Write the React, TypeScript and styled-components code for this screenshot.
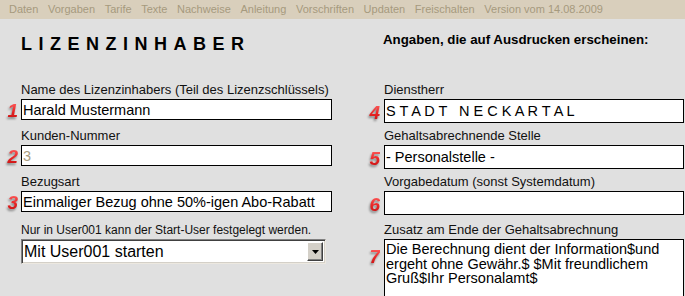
import React from "react";
import styled, { createGlobalStyle } from "styled-components";

const Global = createGlobalStyle`
  html, body { margin: 0; padding: 0; overflow: hidden; }
  body {
    background: #e0e0e0;
    font-family: "Liberation Sans", Arial, sans-serif;
    color: #000;
  }
`;

const Page = styled.div`
  width: 685px;
  height: 296px;
  overflow: hidden;
  background: #e0e0e0;
`;

const MenuBar = styled.nav`
  display: flex;
  gap: 9.6px;
  height: 19px;
  padding-left: 9px;
  background: #d9cfbc;
  font: 11px/19px "Liberation Sans", Arial, sans-serif;
  color: #a69a7e;
  white-space: nowrap;
`;

const MenuItem = styled.span`
  cursor: pointer;
`;

const Main = styled.div`
  display: grid;
  grid-template-columns: 332px 1fr;
  grid-template-rows: 63px auto;
  column-gap: 28px;
`;

const MainTitle = styled.h1`
  margin: 0;
  padding: 15px 0 0 21px;
  font: bold 18px/20px "Liberation Sans", Arial, sans-serif;
  letter-spacing: 6.5px;
`;

const SubTitle = styled.h2`
  margin: 0;
  padding: 13px 0 0 23px;
  font: bold 13.3px/16px "Liberation Sans", Arial, sans-serif;
`;

const Stack = styled.div`
  display: flex;
  flex-direction: column;
`;

const Field = styled.div<{ $gap: number; $top?: number }>`
  display: flex;
  flex-direction: column;
  margin-bottom: ${(p) => p.$gap}px;
  margin-top: ${(p) => p.$top ?? 0}px;
`;

const Label = styled.label<{ $indent: number; $size?: number }>`
  display: block;
  height: 16px;
  margin-bottom: 1px;
  padding-left: ${(p) => p.$indent}px;
  font: ${(p) => p.$size ?? 13}px/16px "Liberation Sans", Arial, sans-serif;
  color: #111;
  white-space: nowrap;
`;

const Row = styled.div`
  display: flex;
  align-items: center;
`;

const Gutter = styled.div<{ $w: number; $pad: number; $top?: boolean }>`
  flex: 0 0 ${(p) => p.$w}px;
  box-sizing: border-box;
  padding-right: ${(p) => p.$pad}px;
  display: flex;
  justify-content: flex-end;
  align-self: ${(p) => (p.$top ? "flex-start" : "center")};
  padding-top: ${(p) => (p.$top ? 9 : 3)}px;
`;

const Num = styled.span`
  font: italic bold 19px/18px "Liberation Sans", Arial, sans-serif;
  background: linear-gradient(180deg, #ff6060 0%, #ea2626 50%, #c41010 100%);
  -webkit-background-clip: text;
  background-clip: text;
  color: transparent;
  filter: drop-shadow(-1px 2px 1.2px rgba(0, 0, 0, 0.4));
`;

const TextInput = styled.input<{ $w: number; $h: number; $muted?: boolean }>`
  box-sizing: border-box;
  width: ${(p) => p.$w}px;
  height: ${(p) => p.$h}px;
  margin: 0;
  padding: 0 1px;
  border: 1px solid #000;
  background: #fff;
  font: 14.5px "Liberation Sans", Arial, sans-serif;
  color: ${(p) => (p.$muted ? "#a89c80" : "#000")};
  outline: none;
  white-space: pre;
`;

const TextArea = styled.textarea`
  box-sizing: border-box;
  width: 300px;
  height: 80px;
  margin: 0;
  padding: 2px 1px;
  border: 1px solid #000;
  background: #fff;
  font: 14.5px/14.5px "Liberation Sans", Arial, sans-serif;
  color: #000;
  resize: none;
  outline: none;
  overflow: hidden;
`;

const SelectBox = styled.div`
  box-sizing: border-box;
  display: flex;
  width: 305px;
  height: 25px;
  margin-left: 21px;
  background: #fff;
  border-top: 1px solid #808080;
  border-left: 1px solid #808080;
  border-right: 1px solid #ece8e0;
  border-bottom: 1px solid #ece8e0;
  box-shadow: inset 1px 1px 0 #404040, inset -1px -1px 0 #d4d0c8;
`;

const NativeSelect = styled.select`
  flex: 1;
  appearance: none;
  -webkit-appearance: none;
  border: none;
  background: transparent;
  margin: 0;
  padding: 0 0 0 2px;
  font: 16px "Liberation Sans", Arial, sans-serif;
  color: #000;
  outline: none;
`;

const DropButton = styled.div`
  box-sizing: border-box;
  flex: 0 0 16px;
  margin: 2px 2px 2px 0;
  background: #d4d0c8;
  border-top: 1px solid #fff;
  border-left: 1px solid #fff;
  border-right: 1px solid #404040;
  border-bottom: 1px solid #404040;
  box-shadow: inset -1px -1px 0 #808080;
  display: flex;
  align-items: center;
  justify-content: center;
`;

const menu = [
  "Daten",
  "Vorgaben",
  "Tarife",
  "Texte",
  "Nachweise",
  "Anleitung",
  "Vorschriften",
  "Updaten",
  "Freischalten",
  "Version vom 14.08.2009",
];

export default function App() {
  return (
    <Page>
      <Global />
      <MenuBar>
        {menu.map((m) => (
          <MenuItem key={m}>{m}</MenuItem>
        ))}
      </MenuBar>
      <Main>
        <MainTitle>LIZENZINHABER</MainTitle>
        <SubTitle>Angaben, die auf Ausdrucken erscheinen:</SubTitle>

        <Stack>
          <Field $gap={8}>
            <Label $indent={21}>Name des Lizenzinhabers (Teil des Lizenzschlüssels)</Label>
            <Row>
              <Gutter $w={21} $pad={3}><Num>1</Num></Gutter>
              <TextInput $w={311} $h={21} defaultValue="Harald Mustermann" />
            </Row>
          </Field>
          <Field $gap={8}>
            <Label $indent={21}>Kunden-Nummer</Label>
            <Row>
              <Gutter $w={21} $pad={3}><Num>2</Num></Gutter>
              <TextInput $w={311} $h={21} $muted defaultValue="3" />
            </Row>
          </Field>
          <Field $gap={8}>
            <Label $indent={21}>Bezugsart</Label>
            <Row>
              <Gutter $w={21} $pad={3}><Num>3</Num></Gutter>
              <TextInput $w={311} $h={21} defaultValue="Einmaliger Bezug ohne 50%-igen Abo-Rabatt" />
            </Row>
          </Field>
          <Field $gap={0} $top={2}>
            <Label $indent={21} $size={12}>Nur in User001 kann der Start-User festgelegt werden.</Label>
            <SelectBox>
              <NativeSelect defaultValue="1">
                <option value="1">Mit User001 starten</option>
              </NativeSelect>
              <DropButton>
                <svg width="7" height="4" viewBox="0 0 7 4">
                  <path d="M0 0h7L3.5 4z" fill="#000" />
                </svg>
              </DropButton>
            </SelectBox>
          </Field>
        </Stack>

        <Stack>
          <Field $gap={5}>
            <Label $indent={24}>Dienstherr</Label>
            <Row>
              <Gutter $w={24} $pad={4}><Num>4</Num></Gutter>
              <TextInput $w={300} $h={24} defaultValue="S T A D T   N E C K A R T A L" />
            </Row>
          </Field>
          <Field $gap={5}>
            <Label $indent={24}>Gehaltsabrechnende Stelle</Label>
            <Row>
              <Gutter $w={24} $pad={4}><Num>5</Num></Gutter>
              <TextInput $w={300} $h={24} defaultValue="- Personalstelle -" />
            </Row>
          </Field>
          <Field $gap={5}>
            <Label $indent={24}>Vorgabedatum (sonst Systemdatum)</Label>
            <Row>
              <Gutter $w={24} $pad={4}><Num>6</Num></Gutter>
              <TextInput $w={300} $h={24} defaultValue="" />
            </Row>
          </Field>
          <Field $gap={0} $top={2}>
            <Label $indent={24}>Zusatz am Ende der Gehaltsabrechnung</Label>
            <Row>
              <Gutter $w={24} $pad={4} $top><Num>7</Num></Gutter>
              <TextArea defaultValue="Die Berechnung dient der Information$und ergeht ohne Gewähr.$ $Mit freundlichem Gruß$Ihr Personalamt$" />
            </Row>
          </Field>
        </Stack>
      </Main>
    </Page>
  );
}
